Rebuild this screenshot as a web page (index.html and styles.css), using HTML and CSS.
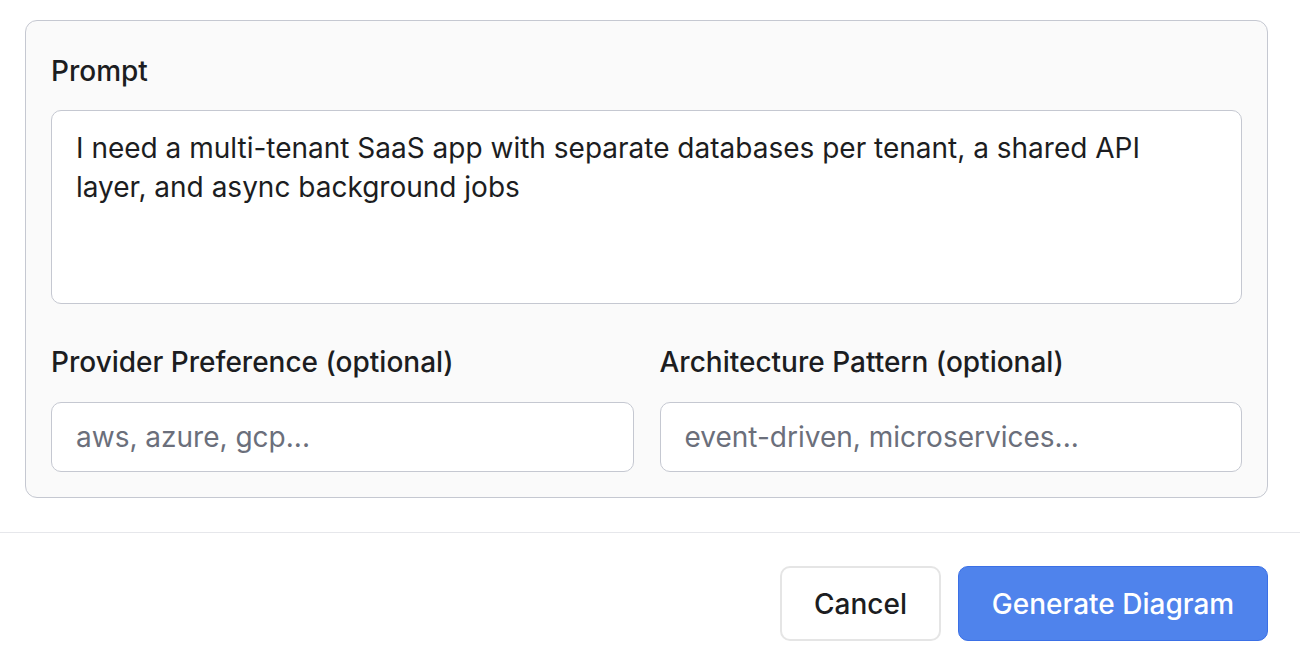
FILE: index.html
```html
<!DOCTYPE html>
<html>
<head>
<meta charset="utf-8">
<link rel="stylesheet" href="styles.css">
</head>
<body>
<div class="dialog">
  <div class="body">
    <div class="card">
      <label class="label prompt-label">Prompt</label>
      <div class="textarea">I need a multi-tenant SaaS app with separate databases per tenant, a shared API layer, and async background jobs</div>
      <div class="row">
        <div class="field">
          <label class="label">Provider Preference (optional)</label>
          <div class="input placeholder">aws, azure, gcp...</div>
        </div>
        <div class="field">
          <label class="label">Architecture Pattern (optional)</label>
          <div class="input placeholder">event-driven, microservices...</div>
        </div>
      </div>
    </div>
  </div>
  <div class="footer">
    <button class="btn btn-secondary">Cancel</button>
    <button class="btn btn-primary">Generate Diagram</button>
  </div>
</div>
</body>
</html>
```

FILE: styles.css
```css
* { box-sizing: border-box; }
html, body {
  margin: 0;
  padding: 0;
  background: #ffffff;
  font-family: Inter, "Noto Sans", sans-serif;
  color: #1c1d21;
}
.dialog {
  width: 1300px;
  height: 660px;
}
.body {
  padding: 20px 32px 0 25px;
}
.card {
  background: #fafafa;
  border: 1.5px solid #c5c8d1;
  border-radius: 12px;
  padding: 31px 25px 25px 25px;
  height: 478px;
}
.label {
  display: block;
  font-size: 28px;
  line-height: 39px;
  font-weight: 500;
  color: #1c1d21;
}
.prompt-label {
  margin-bottom: 19px;
}
.textarea {
  background: #ffffff;
  border: 1.5px solid #c5c8d1;
  border-radius: 10px;
  height: 194px;
  padding: 18px 24px;
  font-size: 28px;
  line-height: 39px;
  color: #1c1d21;
}
.row {
  display: grid;
  grid-template-columns: 1fr 1fr;
  column-gap: 26px;
  margin-top: 39px;
}
.field .label {
  margin-bottom: 20px;
}
.input {
  background: #ffffff;
  border: 1.5px solid #c5c8d1;
  border-radius: 10px;
  height: 70px;
  padding: 0 24px;
  display: flex;
  align-items: center;
  font-size: 28px;
}
.placeholder {
  color: #6b6f7b;
}
.footer {
  margin-top: 34px;
  border-top: 1.5px solid #e6e7eb;
  padding: 33px 32px 0 0;
  display: flex;
  justify-content: flex-end;
  gap: 17px;
}
.btn {
  font-family: Inter, "Noto Sans", sans-serif;
  font-size: 28px;
  font-weight: 500;
  height: 75px;
  border-radius: 10px;
  padding: 0;
  cursor: pointer;
}
.btn-secondary {
  background: #ffffff;
  border: 2px solid #e5e5e5;
  color: #1c1d21;
  width: 161px;
}
.btn-primary {
  background: #4f83ec;
  border: 1.5px solid #3b70e6;
  color: #ffffff;
  width: 310px;
}
```
